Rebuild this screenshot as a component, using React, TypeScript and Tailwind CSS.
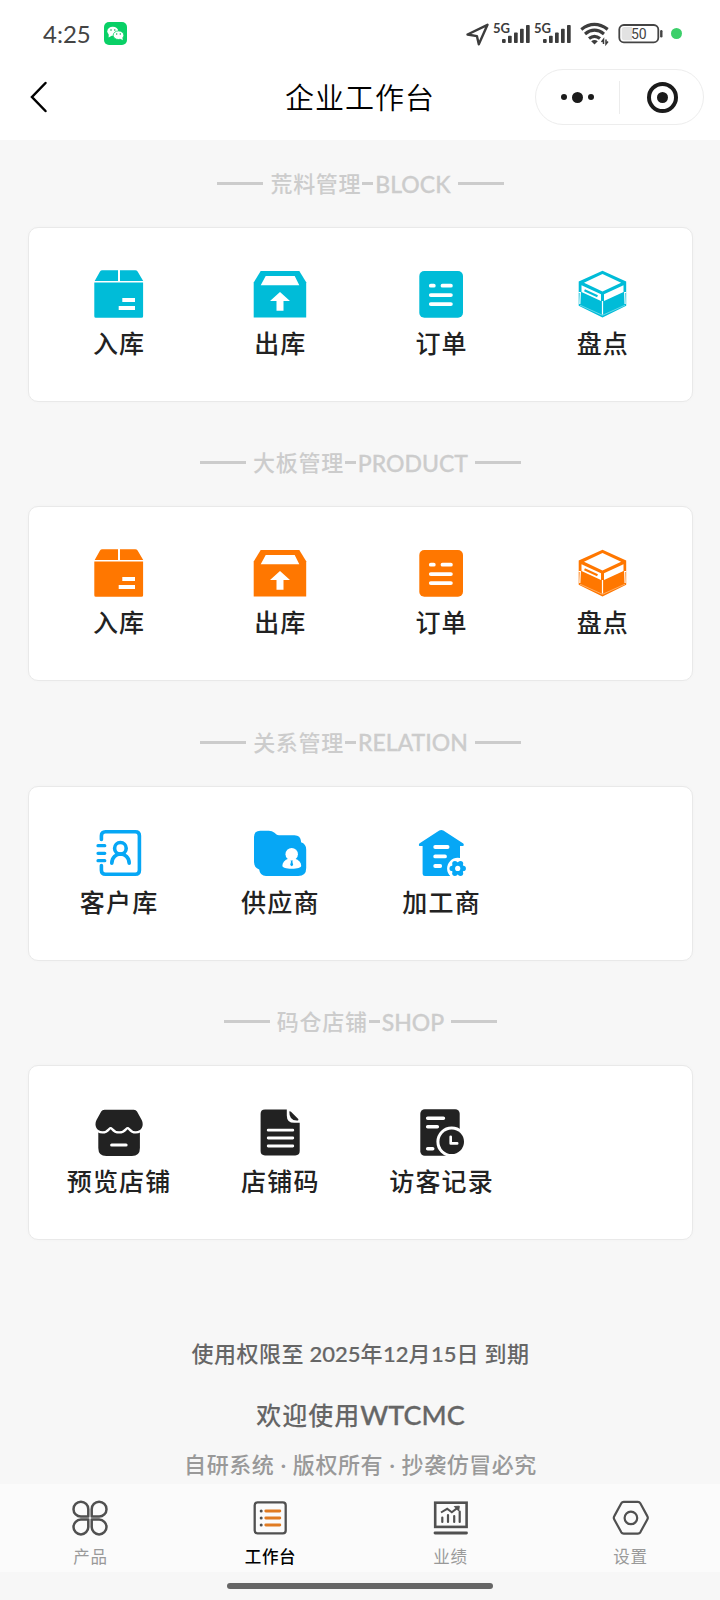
import React from "react";

type IconProps = { className?: string };
type Item = { label: string; Icon: React.FC<IconProps> };

const InboundIcon = ({ className }: IconProps) => (
  <svg width="56" height="48" viewBox="0 0 56 48" className={className} fill="currentColor">
    <path d="M3.7 10.9 9 1.6Q9.8.2 11.3.2H27v10.7ZM29 10.9V.2h15.2q1.6 0 2.4 1.4l5.6 9.3Z" />
    <path d="M3.3 12.6h48.8v33.6q0 1.6-1.6 1.6H4.9q-1.6 0-1.6-1.6Z" />
    <path d="M31.3 28H44v4H31.3ZM27.7 36H44v4H27.7Z" fill="#fff" />
  </svg>
);

const OutboundIcon = ({ className }: IconProps) => (
  <svg width="56" height="48" viewBox="0 0 56 48" className={className} fill="currentColor">
    <path d="M1.7 47.6V12.5L8.7 1h38.6L54.2 12.3v35.3Z" />
    <path d="M13.7 6h29l4.6 9.2H8.7ZM28 22l10 9h-6.5v9.800h-7V31H18Z" fill="#fff" />
  </svg>
);

const OrderIcon = ({ className }: IconProps) => (
  <svg width="56" height="48" viewBox="0 0 56 48" className={className}>
    <rect x="6.3" y="1" width="43.7" height="46.7" rx="5" fill="currentColor" />
    <path
      d="M17.8 15.7h3M29.5 15.7h8.4M17.8 25.1h20.1M17.8 34.1h20.1"
      stroke="#fff"
      strokeWidth="3.8"
      strokeLinecap="round"
    />
  </svg>
);

const CheckIcon = ({ className }: IconProps) => (
  <svg width="56" height="48" viewBox="0 0 56 48" className={className} fill="currentColor">
    <path
      fillRule="evenodd"
      d="M28.5.8 52.2 11.5v24.3L28.5 47.5 4.7 35.8V11.5ZM28.5 4 10 12.8l18.5 8.6 18.6-8.6Z"
    />
    <path d="M7.5 15.200 27 24.200V31L7.500 22ZM30 24.200l19.500-9V22L30 31Z" fill="#fff" />
    <path d="M10.500 20.300 23.500 26.200" stroke="currentColor" strokeWidth="2.200" />
    <path
      d="M4.500 22.500h1.800L5.800 34M52.300 22.500h-1.600l.4 11.500M28.500 31v13.500"
      fill="none"
      stroke="#fff"
      strokeWidth="1.2"
    />
    <path d="M6 35.200 28.500 45.300 51 35.200" fill="none" stroke="#fff" strokeWidth=".4" />
  </svg>
);

const CustomerIcon = ({ className }: IconProps) => (
  <svg
    width="56"
    height="48"
    viewBox="0 0 56 48"
    className={className}
    fill="none"
    stroke="currentColor"
    strokeWidth="3.6"
    strokeLinecap="round"
  >
    <path d="M10.400 10.500V6.700q0-4 4-4h30q4 0 4 4v34.600q0 4-4 4h-30q-4 0-4-4v-4.800" />
    <path d="M7 16.700h6.800M7 24.300h6.800M7 31.700h6.800" strokeWidth="3.200" />
    <circle cx="29.400" cy="19.300" r="5.800" />
    <path d="M20.800 34.200c.2-12.200 17.200-12.200 17.400 0" />
  </svg>
);

const SupplierIcon = ({ className }: IconProps) => (
  <svg width="56" height="48" viewBox="0 0 56 48" className={className} fill="currentColor">
    <path d="M2 8q0-6.300 6.300-6.300h8.500Q20 1.700 22.500 3.800L24.500 5.600Q25.300 6.200 27 6.200H42.500Q48.500 6.200 49 12.200V13.300Q54.200 15 54.200 20.500V39Q54.200 47 46.200 47H14Q8 47 7.200 40.500 2 38.500 2 33Z" />
    <circle cx="39.700" cy="25.200" r="6.200" fill="#fff" />
    <path d="M36.800 29.500h5.800q6.600 2.300 6.600 7.300c0 2-4 3-9.500 3s-9.300-1-9.300-3q0-5 6.400-7.300Z" fill="#fff" />
    <path d="m38.500 31.500h2.400l-.5 1.300.8 3.200-1.500 1.200-1.500-1.200.8-3.200Z" />
  </svg>
);

const FactoryIcon = ({ className }: IconProps) => (
  <svg width="56" height="48" viewBox="0 0 56 48" className={className} fill="currentColor">
    <path d="M6.300 14.500 26.300 1.600q2-1.200 4 0l20 12.900q1.500 2.500-1.500 2.600H47v30H12q-2.400 0-2.400-2.400V17.100H7.500q-2.500 0-1.200-2.600Z" />
    <path
      d="M22.200 18h12.400M22.200 27.400h9.800M22.200 37h5"
      stroke="#fff"
      strokeWidth="3.800"
      strokeLinecap="round"
    />
    <circle cx="44.700" cy="39.400" r="10.600" fill="#fff" />
    <circle cx="44.700" cy="39.400" r="6.200" />
    <circle cx="50.200" cy="39.400" r="2.700" />
    <circle cx="39.200" cy="39.400" r="2.700" />
    <circle cx="47.500" cy="34.600" r="2.700" />
    <circle cx="41.900" cy="34.600" r="2.700" />
    <circle cx="47.500" cy="44.200" r="2.700" />
    <circle cx="41.900" cy="44.200" r="2.700" />
    <circle cx="44.700" cy="39.400" r="2.600" fill="#fff" />
  </svg>
);

const StoreIcon = ({ className }: IconProps) => (
  <svg width="56" height="48" viewBox="0 0 56 48" className={className} fill="currentColor">
    <path d="M7.300 20h41.600v20q0 8-8 8H15.300q-8 0-8-8Z" />
    <path
      d="M13.500 1.700h29.300q2.200 0 3.200 1.800l4.700 8.500c2.700 5.600-.2 11.300-6 11.300q-3.200 0-5.800-3.100-2.200-2.400-4.500 0-2.600 3.100-6.300 3.100t-6.200-3.100q-2.300-2.400-4.500 0-2.600 3.100-5.800 3.100C5.700 23.300 2.800 17.600 5.500 12l4.700-8.500q1-1.800 3.300-1.800Z"
      stroke="#fff"
      strokeWidth="4.600"
      paintOrder="stroke"
    />
    <path d="M20.600 37h14.500" stroke="#fff" strokeWidth="3" strokeLinecap="round" />
  </svg>
);

const DocumentIcon = ({ className }: IconProps) => (
  <svg width="56" height="48" viewBox="0 0 56 48" className={className} fill="currentColor">
    <path d="M13 1.400h21.800v6q0 7.400 7.400 7.400h5.500V43q0 4.400-4.400 4.400H13q-4.400 0-4.400-4.400V5.800q0-4.400 4.400-4.400Z" />
    <path d="M37.300 3.500q.8-.6 1.700.3l7 7q1 1 0 1.700-8.900.8-8.700-9Z" />
    <path
      d="M16.200 22.200h24.600M16.200 30h24.600M16.200 38h24.600"
      stroke="#fff"
      strokeWidth="2.800"
      strokeLinecap="round"
    />
  </svg>
);

const RecordIcon = ({ className }: IconProps) => (
  <svg width="56" height="48" viewBox="0 0 56 48" className={className} fill="currentColor">
    <rect x="7.300" y="1.300" width="39.400" height="46.500" rx="4.500" />
    <path
      d="M14.700 10.200h15.700M14.700 18.700h9.600M14.700 40.700h5"
      stroke="#fff"
      strokeWidth="3.600"
      strokeLinecap="round"
    />
    <circle cx="38.700" cy="33.700" r="15.300" fill="#fff" />
    <circle cx="38.700" cy="33.700" r="12.300" />
    <path
      d="M37.700 28.700v6.700h6.500"
      stroke="#fff"
      strokeWidth="2.600"
      fill="none"
      strokeLinecap="round"
      strokeLinejoin="round"
    />
  </svg>
);

const SignalIcon = () => (
  <svg width="28" height="20" viewBox="0 0 28 20" fill="#3c3c3c">
    <rect x="0" y="15" width="3.700" height="4" rx="1" />
    <rect x="6" y="11.700" width="3.700" height="7.300" rx=".8" />
    <rect x="12" y="8.500" width="3.700" height="10.500" rx=".8" />
    <rect x="18" y="4.800" width="3.700" height="14.200" rx=".8" />
    <rect x="24" y="1" width="3.700" height="18" rx=".8" />
  </svg>
);

const Signal5G = () => (
  <div className="flex w-[37px] items-start">
    <span className="-mr-[8px] w-[18px] font-[Lato] text-[13px] leading-[12px] font-bold text-[#3c3c3c]">5G</span>
    <div className="mt-[2px] shrink-0">
      <SignalIcon />
    </div>
  </div>
);

const StatusBar = () => (
  <div className="flex h-[60px] items-start pt-[22px] pl-[43px]">
    <span className="w-[61px] font-[Lato] text-[24px] leading-6 text-[#444]">4:25</span>
    <svg width="23" height="23" viewBox="0 0 23 23">
      <rect width="23" height="23" rx="5" fill="#09d066" />
      <ellipse cx="8.800" cy="9.300" rx="5.500" ry="4.500" fill="#fff" />
      <path d="m4.800 11.500-.2 4 3.500-2Z" fill="#fff" />
      <ellipse cx="14.500" cy="13.200" rx="5.300" ry="4.300" fill="#fff" stroke="#09d066" strokeWidth=".8" />
      <path d="m16 16.500 2.800 1.700-.6-3.200Z" fill="#fff" />
      <g fill="#09a850">
        <circle cx="7" cy="8" r=".8" />
        <circle cx="10.800" cy="8" r=".8" />
        <circle cx="12.700" cy="12" r=".7" />
        <circle cx="16.300" cy="12" r=".7" />
      </g>
    </svg>
    <div className="ml-[338px] flex items-start">
      <svg width="26" height="25" viewBox="0 0 26 25" className="mr-[2px]" fill="none" stroke="#3c3c3c" strokeWidth="2.400" strokeLinejoin="round">
        <path d="M2.500 12.500 22.500 2.800 13.800 22.300l-1.900-8.200Z" />
      </svg>
      <Signal5G />
      <div className="ml-[4px]">
        <Signal5G />
      </div>
      <svg width="30" height="24" viewBox="0 0 30 24" className="ml-[9px]" fill="none" stroke="#3c3c3c" strokeWidth="3.200">
        <path d="M1.300 7.400q13-10 26.400 0M5 12q9.500-7.600 19 0M9 16.500q5.500-4.400 11 0" />
        <path d="m11.200 19.300q3.300-2.600 6.600 0l-3.300 3.200Z" fill="#3c3c3c" stroke="none" />
        <path d="M23.500 22v-4.500l-2 2.500M26 17.500V22l2-2.500" strokeWidth="1.500" />
      </svg>
      <svg width="46" height="22" viewBox="0 0 46 22" className="ml-[8px]">
        <rect x="1.300" y="3" width="39" height="17.300" rx="4.500" fill="#fff" stroke="#444" strokeWidth="1.800" />
        <path d="M6.500 5h7.500v13.300H6.500q-2.800 0-2.800-2.800V7.800Q3.700 5 6.500 5Z" fill="#e2e2e2" />
        <path d="M43.300 9.200v5" stroke="#444" strokeWidth="2.400" strokeLinecap="round" />
        <text x="20.800" y="16.700" textAnchor="middle" fontFamily="Roboto" fontSize="14" fill="#444">50</text>
      </svg>
      <span className="mt-[6px] ml-[7px] size-[11px] rounded-full bg-[#3ccf6a]" />
    </div>
  </div>
);

const NavBar = () => (
  <div className="flex h-[80px] items-start">
    <svg width="60" height="40" viewBox="0 0 60 40" className="mt-[17px]" fill="none" stroke="#000" strokeWidth="2.500">
      <path d="M45.500 6 32 20l13.500 14" strokeLinecap="round" />
    </svg>
    <h1 className="mt-[15px] ml-[180px] w-[240px] text-center text-[29px] leading-[42px] font-[350] tracking-[1px] text-black">
      企业工作台
    </h1>
    <div className="mt-[9px] ml-[55px] flex h-[56px] w-[169px] items-center rounded-full border border-[#ededed]">
      <div className="flex w-[83px] items-center justify-center gap-[5px]">
        <span className="size-[6px] rounded-full bg-[#1b1b1b]" />
        <span className="size-[11px] rounded-full bg-[#1b1b1b]" />
        <span className="size-[6px] rounded-full bg-[#1b1b1b]" />
      </div>
      <div className="h-[33px] w-px bg-[#ececec]" />
      <div className="flex flex-1 justify-center pl-[2px]">
        <span className="flex size-[31px] items-center justify-center rounded-full border-4 border-[#1b1b1b]">
          <span className="size-[11px] rounded-full bg-[#1b1b1b]" />
        </span>
      </div>
    </div>
  </div>
);

type SectionProps = { title: string; latin: string; color: string; items: Item[] };

const Section = ({ title, latin, color, items }: SectionProps) => (
  <section className="h-[279.400px]">
    <div className="flex h-[87px] items-center justify-center gap-[7px] pl-px text-[22px] font-medium tracking-[0.700px] text-[#ccc]">
      <span className="h-[3px] w-[46px] bg-[#ccc]" />
      <h2 className="flex items-center leading-[30px] font-medium">
        <span className="-mt-[3px]">{title}</span>
        <span className="mr-[2px] ml-px h-[3px] w-[11px] bg-[#ccc]" />
        <span className="font-[Lato] text-[23px] tracking-normal [-webkit-text-stroke:0.300px]">{latin}</span>
      </h2>
      <span className="h-[3px] w-[46px] bg-[#ccc]" />
    </div>
    <div className="mr-[27px] ml-[28px] grid h-[175px] grid-cols-4 rounded-[10px] border border-[#e9e9e9] bg-white px-[9px] pt-[42px] shadow-[0_0_4px_rgba(0,0,0,0.020)]">
      {items.map(({ label, Icon }) => (
        <div key={label} className="flex flex-col items-center">
          <Icon className={color} />
          <span className="mt-[6px] pl-px text-[25px] leading-[36px] font-medium tracking-[1.200px] whitespace-nowrap text-[#222]">
            {label}
          </span>
        </div>
      ))}
    </div>
  </section>
);

const stockItems: Item[] = [
  { label: "入库", Icon: InboundIcon },
  { label: "出库", Icon: OutboundIcon },
  { label: "订单", Icon: OrderIcon },
  { label: "盘点", Icon: CheckIcon },
];

const relationItems: Item[] = [
  { label: "客户库", Icon: CustomerIcon },
  { label: "供应商", Icon: SupplierIcon },
  { label: "加工商", Icon: FactoryIcon },
];

const shopItems: Item[] = [
  { label: "预览店铺", Icon: StoreIcon },
  { label: "店铺码", Icon: DocumentIcon },
  { label: "访客记录", Icon: RecordIcon },
];

const ProductTabIcon = () => (
  <svg width="38" height="36" viewBox="0 0 38 36" fill="none" stroke="#505050" strokeWidth="2.500">
    <path
      d="M17.300 16.600V9.200a7.400 7.400 0 1 0-7.400 7.400ZM20.700 16.600V9.200a7.400 7.400 0 1 1 7.400 7.400ZM17.300 19.600V27a7.400 7.400 0 1 1-7.400-7.400ZM20.700 19.600V27a7.400 7.400 0 1 0 7.400-7.400Z"
      strokeLinejoin="round"
    />
  </svg>
);

const WorkTabIcon = () => (
  <svg width="38" height="36" viewBox="0 0 38 36" fill="none">
    <rect x="3.700" y="2.400" width="31" height="31" rx="2.800" stroke="#505050" strokeWidth="2.300" />
    <path d="M14.800 11h14M14.800 18h14M14.800 25h14" stroke="#e07b22" strokeWidth="2.900" strokeLinecap="round" />
    <g fill="#505050">
      <circle cx="10.200" cy="11" r="1.500" />
      <circle cx="10.200" cy="18" r="1.500" />
      <circle cx="10.200" cy="25" r="1.500" />
    </g>
  </svg>
);

const ChartTabIcon = () => (
  <svg width="38" height="36" viewBox="0 0 38 36" fill="none" stroke="#505050">
    <rect x="4.200" y="2.700" width="31.400" height="24.200" strokeWidth="2.600" />
    <path d="M4 33h31.500" strokeWidth="2.800" strokeLinecap="round" />
    <path d="M11.300 17.500v4.500M17 15v7M23.200 16v6M28.700 11.500V22" strokeWidth="2.200" strokeLinecap="round" />
    <path d="m10 12.500 6.200-3.700 4.600 3.500 6-4.700" strokeWidth="2" />
    <path d="m23.300 6.500 5-.3-.6 4.800Z" fill="#505050" />
  </svg>
);

const SettingTabIcon = () => (
  <svg width="38" height="36" viewBox="0 0 38 36" fill="none" stroke="#505050" strokeWidth="2.200">
    <path d="M12.700 1.900h14.200q1.600 0 2.400 1.400l7 12.800q1 1.700 0 3.400l-7 12.800q-.8 1.300-2.400 1.300H12.700q-1.600 0-2.400-1.300l-7-12.800q-1-1.700 0-3.400l7-12.800q.8-1.400 2.400-1.400Z" />
    <circle cx="19.900" cy="17.900" r="6.300" />
  </svg>
);

const tabs = [
  { label: "产品", Icon: ProductTabIcon },
  { label: "工作台", Icon: WorkTabIcon, active: true },
  { label: "业绩", Icon: ChartTabIcon },
  { label: "设置", Icon: SettingTabIcon },
];

const TabBar = () => (
  <nav className="grid h-[88px] shrink-0 grid-cols-4 bg-[#fbfbfb] pt-[16px]">
    {tabs.map(({ label, Icon, active }) => (
      <div key={label} className="flex flex-col items-center">
        <Icon />
        <span
          className={`mt-[7px] pl-px text-[16.500px] leading-[26px] tracking-[0.700px] ${
            active ? "font-medium text-black" : "text-[#999]"
          }`}
        >
          {label}
        </span>
      </div>
    ))}
  </nav>
);

const App = () => {
  return (
    <div className="flex h-[1600px] w-[720px] flex-col overflow-hidden bg-[#f7f7f7] font-['Noto_Sans_CJK_SC',sans-serif]">
      <header className="h-[140px] shrink-0 bg-white">
        <StatusBar />
        <NavBar />
      </header>
      <main className="h-[1344px] shrink-0 overflow-hidden">
        <Section title="荒料管理" latin="BLOCK" color="text-[#00bcd8]" items={stockItems} />
        <Section title="大板管理" latin="PRODUCT" color="text-[#ff7700]" items={stockItems} />
        <Section title="关系管理" latin="RELATION" color="text-[#06a7f5]" items={relationItems} />
        <Section title="码仓店铺" latin="SHOP" color="text-[#222]" items={shopItems} />
        <footer className="flex flex-col items-center font-medium whitespace-pre">
          <p className="mt-[78px] pl-px text-[22px] leading-[32px] tracking-[0.500px] text-[#666]">
            使用权限至 <span className="font-[Lato] tracking-normal [-webkit-text-stroke:0.200px]">2025</span>年
            <span className="font-[Lato] tracking-normal [-webkit-text-stroke:0.200px]">12</span>月
            <span className="font-[Lato] tracking-normal [-webkit-text-stroke:0.200px]">15</span>日 到期
          </p>
          <p className="mt-[25px] pl-px text-[25px] leading-[38px] tracking-[1px] text-[#666]">
            欢迎使用
            <span className="font-[Lato] text-[27px] tracking-normal [-webkit-text-stroke:0.300px]">WTCMC</span>
          </p>
          <p className="mt-[13px] pl-px text-[22px] leading-[32px] tracking-[0.550px] text-[#999]">
            自研系统<span className="font-[Lato]"> · </span>版权所有<span className="font-[Lato]"> · </span>抄袭仿冒必究
          </p>
        </footer>
      </main>
      <TabBar />
      <div className="flex justify-center pt-[11px]">
        <span className="h-[6px] w-[266px] rounded-full bg-[#666]" />
      </div>
    </div>
  );
};

export default App;
